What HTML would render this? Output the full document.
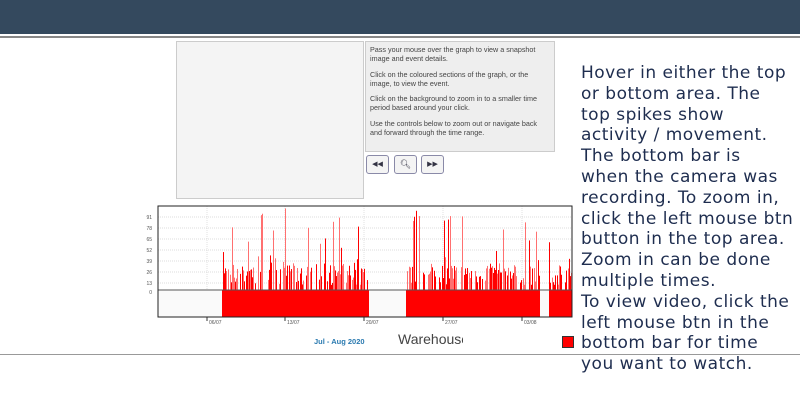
<!DOCTYPE html>
<html><head><meta charset="utf-8"><style>
body{margin:0;width:800px;height:400px;overflow:hidden;background:#fff;position:relative;font-family:"Liberation Sans",sans-serif}
.hdr{position:absolute;left:0;top:0;width:800px;height:34px;background:#34495e}
.l1{position:absolute;left:0;top:36px;width:800px;height:2px;background:#888}
.l2{position:absolute;left:0;top:354px;width:800px;height:1px;background:#999}
.img{position:absolute;left:176px;top:41px;width:186px;height:156px;border:1px solid #ccc;background:#f4f4f4}
.info{position:absolute;left:365px;top:41px;width:180px;height:103px;border:1px solid #ccc;background:#eee;padding:3px 4px;font-size:7.2px;color:#444;line-height:9.3px}
.info p{margin:0 0 6px}
.btn{position:absolute;top:155px;width:21px;height:17px;border:1px solid #8a8aa8;border-radius:3px;background:#f4f4f4;font-size:7px;color:#334;text-align:center;line-height:17px}
.side{position:absolute;left:581px;top:63px;width:213px;font-family:"DejaVu Sans",sans-serif;font-size:17px;letter-spacing:0.5px;line-height:20.8px;color:#1e2d4f}
</style></head><body>
<div class="hdr"></div><div class="l1"></div>
<div class="img"></div>
<div class="info"><p>Pass your mouse over the graph to view a snapshot image and event details.</p><p>Click on the coloured sections of the graph, or the image, to view the event.</p><p>Click on the background to zoom in to a smaller time period based around your click.</p><p>Use the controls below to zoom out or navigate back and forward through the time range.</p></div>
<div class="btn" style="left:366px">◀◀</div><div class="btn" style="left:394px;font-size:9px">&#x1F50D;&#xFE0E;</div><div class="btn" style="left:421px">▶▶</div>
<svg id="ch" style="position:absolute;left:0;top:0" width="800" height="400"></svg>
<div style="position:absolute;left:314px;top:337px;font-size:7.5px;font-weight:bold;color:#2a7ab0">Jul - Aug 2020</div>
<div style="position:absolute;left:398px;top:331px;width:65px;overflow:hidden;white-space:nowrap;font-size:14px;color:#444">Warehouse</div>
<div style="position:absolute;left:562px;top:336px;width:10px;height:10px;background:#f00;border:1px solid #333"></div>
<div class="l2"></div>
<div class="side">Hover in either the top or bottom area. The top spikes show activity / movement. The bottom bar is when the camera was recording. To zoom in, click the left mouse btn button in the top area. Zoom in can be done multiple times.<br>To view video, click the left mouse btn in the bottom bar for time you want to watch.</div>
<script>
var s='',L=158,R=572,T=206,B=317,Z=290;
s+='<rect x="'+L+'" y="'+Z+'" width="'+(R-L)+'" height="'+(B-Z)+'" fill="#fafafa"/>';
var ys=[[91,218],[78,229],[65,240],[52,251],[39,262],[26,273],[13,284],[0,293]];
ys.forEach(function(a){if(a[0])s+='<line x1="'+L+'" x2="'+R+'" y1="'+(a[1]-1)+'" y2="'+(a[1]-1)+'" stroke="#bbb" stroke-dasharray="1,1" stroke-width="0.6"/>';s+='<text x="152" y="'+(a[1]+1)+'" font-size="5" fill="#555" text-anchor="end">'+a[0]+'</text>';});
var xs=[[207,'06/07'],[285,'13/07'],[364,'20/07'],[443,'27/07'],[522,'03/08']];
xs.forEach(function(a){s+='<line x1="'+a[0]+'" x2="'+a[0]+'" y1="'+T+'" y2="'+Z+'" stroke="#ccc" stroke-dasharray="1,1" stroke-width="0.6"/><line x1="'+a[0]+'" x2="'+a[0]+'" y1="'+B+'" y2="'+(B+4)+'" stroke="#333"/><text x="'+(a[0]+2)+'" y="'+(B+7)+'" font-size="5" fill="#555">'+a[1]+'</text>';});
var seed=7;function r(){seed=(seed*16807)%2147483647;return seed/2147483647;}
[[222,369],[406,540],[549,572]].forEach(function(g){s+='<rect x="'+g[0]+'" y="'+Z+'" width="'+(g[1]-g[0])+'" height="'+(B-Z)+'" fill="#f00"/>';
for(var x=g[0];x<g[1];x+=1){var v=r();var h=v<0.3?0:(v<0.85?5+r()*22:20+r()*62);if(h>0){s+='<rect x="'+x+'" y="'+(Z-h)+'" width="1" height="'+h+'" fill="'+(r()<0.6?'#f00':'#ff7070')+'"/>';}}});
s+='<line x1="'+L+'" x2="'+R+'" y1="'+Z+'" y2="'+Z+'" stroke="#555"/>';
s+='<rect x="'+L+'" y="'+T+'" width="'+(R-L)+'" height="'+(B-T)+'" fill="none" stroke="#222"/>';
document.getElementById('ch').innerHTML=s;
</script>
</body></html>
